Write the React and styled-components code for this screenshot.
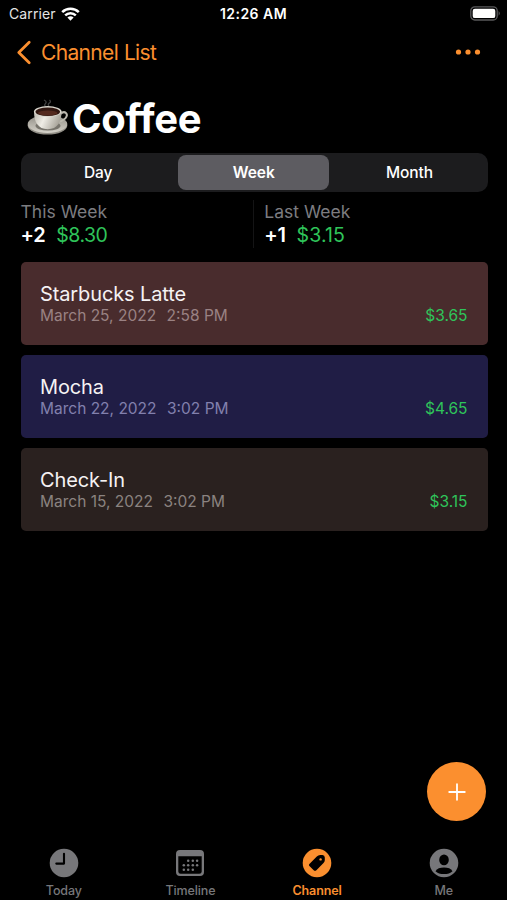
import React, { useState } from 'react';
import styled, { createGlobalStyle, ThemeProvider } from 'styled-components';

const theme = {
  accent: '#fb8f2f',
  money: '#2fc45a',
  muted: '#7c7c80',
  segment: '#1c1c1e',
  segmentActive: '#5d5c61',
};

const GlobalStyle = createGlobalStyle`
  * {
    box-sizing: border-box;
  }

  body {
    margin: 0;
    background: #000;
    color: #fff;
    font-family: Inter, 'Liberation Sans', sans-serif;
  }

  button {
    border: none;
    padding: 0;
    background: none;
    font-family: inherit;
    color: inherit;
    cursor: pointer;
  }

  svg {
    display: block;
  }
`;

const Screen = styled.div`
  position: relative;
  display: flex;
  flex-direction: column;
  width: 507px;
  height: 900px;
  overflow: hidden;
  background: #000;
`;

const StatusBar = styled.header`
  display: grid;
  grid-template-columns: 1fr auto 1fr;
  align-items: center;
  height: 27px;
  padding: 0 6px 0 9px;
`;

const Carrier = styled.div`
  display: flex;
  align-items: center;
  gap: 5px;
  font-size: 14px;
  letter-spacing: 0.1px;
  color: #e4e4e4;
`;

const Clock = styled.div`
  margin-right: 3px;
  font-size: 14px;
  font-weight: 600;
  letter-spacing: 0.45px;
`;

const BatterySlot = styled.div`
  justify-self: end;
`;

const NavBar = styled.nav`
  display: flex;
  align-items: center;
  justify-content: space-between;
  height: 50px;
  padding: 0 26px 0 16px;
  color: ${props => props.theme.accent};
`;

const BackButton = styled.button`
  display: flex;
  align-items: center;
  gap: 9px;
  font-size: 21px;
  letter-spacing: -0.65px;
  word-spacing: 0.5px;
`;

const Title = styled.h1`
  display: flex;
  align-items: center;
  gap: 2px;
  height: 76px;
  margin: 0;
  padding: 7px 0 0 26px;
  font-size: 40px;
  font-weight: 700;
  letter-spacing: -0.3px;
`;

const Segments = styled.div`
  display: grid;
  grid-template-columns: repeat(3, 1fr);
  height: 38.5px;
  margin: 0 19.5px 0 20.5px;
  border-radius: 10px;
  background: ${props => props.theme.segment};
`;

const Segment = styled.button`
  margin: 2px 2.5px 2px 2px;
  border-radius: 8px;
  background: ${props => (props.$active ? props.theme.segmentActive : 'transparent')};
  font-size: 15.5px;
  font-weight: ${props => (props.$active ? 600 : 500)};
  letter-spacing: -0.1px;
`;

const Summary = styled.section`
  display: grid;
  grid-template-columns: 1fr 1fr;
  height: 48px;
  margin: 8.5px 21px 0 20.5px;
`;

const SummaryColumn = styled.div`
  padding-left: ${props => (props.$divided ? '10px' : '0')};
  border-left: ${props => (props.$divided ? '1px solid #141415' : 'none')};
`;

const SummaryLabel = styled.div`
  font-size: 17.5px;
  line-height: 23px;
  letter-spacing: 0.02px;
  color: ${props => props.theme.muted};
`;

const SummaryValue = styled.div`
  display: flex;
  gap: 11px;
  font-size: 20px;
  line-height: 25px;
  letter-spacing: -0.3px;
`;

const Count = styled.span`
  font-weight: 600;
`;

const Money = styled.span`
  color: ${props => props.theme.money};
`;

const Total = styled(Money)`
  font-size: 19.5px;
  letter-spacing: ${props => (props.$tight ? '-0.5px' : '0.1px')};
`;

const EntryList = styled.ul`
  display: flex;
  flex-direction: column;
  gap: 10px;
  margin: 14px 19.5px 0 20.5px;
  padding: 0;
  list-style: none;
`;

const Entry = styled.li`
  height: 83px;
  padding: 20px 20px 0 19.5px;
  border-radius: 5px;
  background: ${props => props.$background};
`;

const EntryName = styled.div`
  font-size: 20px;
  line-height: 25px;
  letter-spacing: -0.12px;
  color: #f5f2f3;
`;

const EntryMeta = styled.div`
  display: flex;
  gap: 10.5px;
  font-size: 15.5px;
  line-height: 18px;
  color: ${props => props.$color};
`;

const EntryPrice = styled(Money)`
  margin-left: auto;
`;

const AddButton = styled.button`
  position: absolute;
  right: 21px;
  bottom: 79px;
  display: flex;
  align-items: center;
  justify-content: center;
  width: 59px;
  height: 59px;
  border-radius: 50%;
  background: ${props => props.theme.accent};
`;

const TabBar = styled.nav`
  display: grid;
  grid-template-columns: repeat(4, 1fr);
  height: 52px;
  margin-top: auto;
  padding-left: 0.5px;
`;

const Tab = styled.button`
  display: flex;
  flex-direction: column;
  align-items: center;
  gap: 5px;
  color: ${props => (props.$active ? props.theme.accent : '#77777a')};
  font-size: 12.5px;
  line-height: 15px;
  font-weight: ${props => (props.$active ? 600 : 500)};
  letter-spacing: -0.12px;
`;

const WifiIcon = () => (
  <svg width="19" height="14" viewBox="0 0 19 14" fill="none" stroke="#fff" strokeWidth="2.5">
    <path d="M1.2 5.1 A11.8 11.8 0 0 1 17.8 5.1" />
    <path d="M4.2 8.4 A7.5 7.5 0 0 1 14.8 8.4" />
    <path d="M9.5 13.8 L6.4 10.6 A4.5 4.5 0 0 1 12.6 10.6 Z" fill="#fff" stroke="none" />
  </svg>
);

const BatteryIcon = () => (
  <svg width="31" height="15" viewBox="0 0 31 15">
    <rect x="0.8" y="0.8" width="26.4" height="13.2" rx="4" fill="none" stroke="#59595b" strokeWidth="1.3" />
    <rect x="2.7" y="2.7" width="22.6" height="9.4" rx="2.2" fill="#fff" />
    <path d="M28.6 5.1 Q31 7.4 28.6 9.7 Z" fill="#59595b" />
  </svg>
);

const ChevronIcon = () => (
  <svg width="16" height="25" viewBox="0 0 16 25" fill="none" stroke="currentColor" strokeWidth="2.8" strokeLinecap="round" strokeLinejoin="round">
    <path d="M13.2 2.2 L2.8 12.5 L13.2 22.8" />
  </svg>
);

const MoreIcon = () => (
  <svg width="26" height="6" viewBox="0 0 26 6" fill="currentColor">
    <circle cx="3.5" cy="3" r="2.6" />
    <circle cx="13" cy="3" r="2.6" />
    <circle cx="22.5" cy="3" r="2.6" />
  </svg>
);

const CoffeeIcon = () => (
  <svg width="44" height="39" viewBox="0 0 44 39">
    <defs>
      <linearGradient id="cup" x1="0" x2="1" y1="0" y2="0.3">
        <stop offset="0" stopColor="#b9b5ab" />
        <stop offset="0.45" stopColor="#efede6" />
        <stop offset="1" stopColor="#a9a59b" />
      </linearGradient>
      <linearGradient id="saucer" x1="0" x2="0" y1="0" y2="1">
        <stop offset="0" stopColor="#8f8c84" />
        <stop offset="1" stopColor="#d6d3ca" />
      </linearGradient>
    </defs>
    <path d="M20.5 8 C15 5 24 4 18 1 M23 7 C20 4 27 4 23.5 1" fill="none" stroke="#626262" strokeWidth="1.3" opacity="0.65" />
    <ellipse cx="21.5" cy="26.4" rx="19.8" ry="9.2" fill="#918e86" />
    <ellipse cx="21.5" cy="25" rx="19.8" ry="9" fill="url(#saucer)" />
    <ellipse cx="22" cy="26.8" rx="12.5" ry="4.8" fill="#77746c" />
    <path d="M34 15.2 C39 10.6 43 15.2 39.3 19.4 C37.4 21.4 34.5 22.6 31.5 23" fill="none" stroke="#bbb8ae" strokeWidth="2" />
    <path d="M8 12.5 C8 23 12 30.2 21.7 30.2 C31.5 30.2 35.5 23 35.5 12.5 Z" fill="url(#cup)" />
    <ellipse cx="21.75" cy="12.5" rx="13.8" ry="5.4" fill="#d9d6cd" />
    <ellipse cx="21.75" cy="12.7" rx="12.3" ry="4.3" fill="#311711" />
    <ellipse cx="21.75" cy="14" rx="9.7" ry="2.4" fill="#542a1f" />
  </svg>
);

const PlusIcon = () => (
  <svg width="18" height="18" viewBox="0 0 18 18" stroke="#fff" strokeWidth="1.8" strokeLinecap="round">
    <path d="M9 1.2 V16.8 M1.2 9 H16.8" />
  </svg>
);

const TodayIcon = () => (
  <svg width="30" height="30" viewBox="0 0 30 30">
    <circle cx="15" cy="15" r="14.3" fill="currentColor" />
    <path d="M15 5.7 V15.6 H7.3" fill="none" stroke="#000" strokeWidth="2.1" strokeLinecap="round" strokeLinejoin="round" />
  </svg>
);

const calendarDots = [
  [15.2, 12.7], [19.8, 12.7], [24.1, 12.7],
  [10.8, 17.2], [15.2, 17.2], [19.8, 17.2], [24.1, 17.2],
  [10.8, 21.7], [15.2, 21.7], [19.8, 21.7],
];

const TimelineIcon = () => (
  <svg width="34" height="30" viewBox="0 0 34 30">
    <path d="M7 2 H27 Q31 2 31 6 V24 Q31 28 27 28 H7 Q3 28 3 24 V6 Q3 2 7 2 Z M5.3 8.3 V23.4 Q5.3 25.8 7.7 25.8 H26.3 Q28.7 25.8 28.7 23.4 V8.3 Z" fill="currentColor" fillRule="evenodd" />
    {calendarDots.map(([x, y]) => (
      <circle key={`${x}-${y}`} cx={x} cy={y} r="1.25" fill="currentColor" />
    ))}
  </svg>
);

const ChannelIcon = () => (
  <svg width="30" height="30" viewBox="0 0 30 30">
    <circle cx="15" cy="15" r="14.3" fill="currentColor" />
    <path d="M7.4 15.9 L14.8 8.5 Q16.2 7.2 18.2 7.1 L20.5 7.1 Q22.7 7.3 22.8 9.5 L22.8 12.2 Q22.7 13.7 21.5 14.9 L14.4 22.2 Q13 23.4 11.7 22.2 L7.4 18 Q6.4 16.9 7.4 15.9 Z" fill="#000" />
    <circle cx="18.6" cy="11.4" r="1.2" fill="currentColor" />
  </svg>
);

const MeIcon = () => (
  <svg width="30" height="30" viewBox="0 0 30 30">
    <circle cx="15" cy="15" r="14.3" fill="currentColor" />
    <ellipse cx="15" cy="11.9" rx="4.8" ry="5.4" fill="#000" />
    <path d="M6.5 23.2 C8 20.7 11 19.6 15 19.6 C19 19.6 22 20.7 23.5 23.2 C21.6 25.2 18.5 26 15 26 C11.5 26 8.4 25.2 6.5 23.2 Z" fill="#000" />
  </svg>
);

const ranges = ['Day', 'Week', 'Month'];

const summaries = [
  { label: 'This Week', count: '+2', total: '$8.30' },
  { label: 'Last Week', count: '+1', total: '$3.15' },
];

const entries = [
  { name: 'Starbucks Latte', date: 'March 25, 2022', time: '2:58 PM', price: '$3.65', background: '#492c2d', meta: '#9a8283' },
  { name: 'Mocha', date: 'March 22, 2022', time: '3:02 PM', price: '$4.65', background: '#201d45', meta: '#8280ad' },
  { name: 'Check-In', date: 'March 15, 2022', time: '3:02 PM', price: '$3.15', background: '#2a211f', meta: '#8b8380' },
];

const tabs = [
  { name: 'Today', Icon: TodayIcon },
  { name: 'Timeline', Icon: TimelineIcon },
  { name: 'Channel', Icon: ChannelIcon },
  { name: 'Me', Icon: MeIcon },
];

const App = () => {
  const [range, setRange] = useState('Week');
  const [tab, setTab] = useState('Channel');

  return (
    <ThemeProvider theme={theme}>
      <GlobalStyle />
      <Screen>
        <StatusBar>
          <Carrier>
            Carrier
            <WifiIcon />
          </Carrier>
          <Clock>12:26 AM</Clock>
          <BatterySlot>
            <BatteryIcon />
          </BatterySlot>
        </StatusBar>

        <NavBar>
          <BackButton>
            <ChevronIcon />
            Channel List
          </BackButton>
          <button aria-label="More">
            <MoreIcon />
          </button>
        </NavBar>

        <Title>
          <CoffeeIcon />
          Coffee
        </Title>

        <Segments>
          {ranges.map(name => (
            <Segment key={name} $active={name === range} onClick={() => setRange(name)}>
              {name}
            </Segment>
          ))}
        </Segments>

        <Summary>
          {summaries.map((item, index) => (
            <SummaryColumn key={item.label} $divided={index > 0}>
              <SummaryLabel>{item.label}</SummaryLabel>
              <SummaryValue>
                <Count>{item.count}</Count>
                <Total $tight={index === 0}>{item.total}</Total>
              </SummaryValue>
            </SummaryColumn>
          ))}
        </Summary>

        <EntryList>
          {entries.map(entry => (
            <Entry key={entry.name} $background={entry.background}>
              <EntryName>{entry.name}</EntryName>
              <EntryMeta $color={entry.meta}>
                <span>{entry.date}</span>
                <span>{entry.time}</span>
                <EntryPrice>{entry.price}</EntryPrice>
              </EntryMeta>
            </Entry>
          ))}
        </EntryList>

        <TabBar>
          {tabs.map(({ name, Icon }) => (
            <Tab key={name} $active={name === tab} onClick={() => setTab(name)}>
              <Icon />
              {name}
            </Tab>
          ))}
        </TabBar>

        <AddButton aria-label="Add">
          <PlusIcon />
        </AddButton>
      </Screen>
    </ThemeProvider>
  );
};

export default App;
